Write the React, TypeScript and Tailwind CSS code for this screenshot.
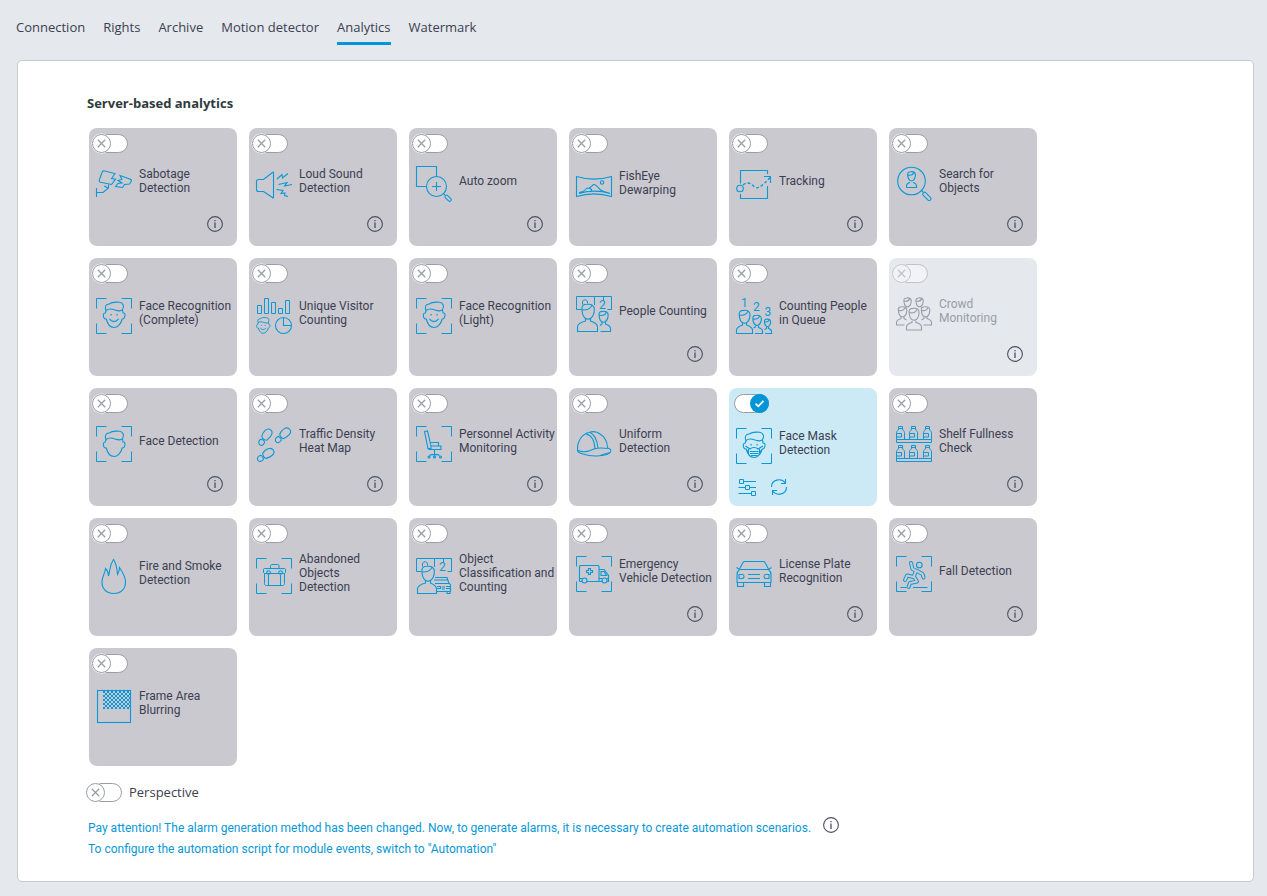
import React, { useId, useState } from 'react';
import clsx from 'clsx';

type IconName =
  | 'sabotage' | 'sound' | 'zoom' | 'fisheye' | 'tracking' | 'search'
  | 'face' | 'visitors' | 'people' | 'queue' | 'crowd' | 'faceOutline'
  | 'steps' | 'chair' | 'helmet' | 'mask' | 'shelf' | 'fire' | 'suitcase'
  | 'objects' | 'ambulance' | 'car' | 'fall' | 'blur';

interface Module {
  title: string;
  icon: IconName;
  info?: boolean;
  enabled?: boolean;
  disabled?: boolean;
}

const TABS = ['Connection', 'Rights', 'Archive', 'Motion detector', 'Analytics', 'Watermark'];

const MODULES: Module[] = [
  { title: 'Sabotage\nDetection', icon: 'sabotage', info: true },
  { title: 'Loud Sound\nDetection', icon: 'sound', info: true },
  { title: 'Auto zoom', icon: 'zoom', info: true },
  { title: 'FishEye\nDewarping', icon: 'fisheye' },
  { title: 'Tracking', icon: 'tracking', info: true },
  { title: 'Search for\nObjects', icon: 'search', info: true },
  { title: 'Face Recognition\n(Complete)', icon: 'face' },
  { title: 'Unique Visitor\nCounting', icon: 'visitors' },
  { title: 'Face Recognition\n(Light)', icon: 'face' },
  { title: 'People Counting', icon: 'people', info: true },
  { title: 'Counting People\nin Queue', icon: 'queue' },
  { title: 'Crowd\nMonitoring', icon: 'crowd', info: true, disabled: true },
  { title: 'Face Detection', icon: 'faceOutline', info: true },
  { title: 'Traffic Density\nHeat Map', icon: 'steps', info: true },
  { title: 'Personnel Activity\nMonitoring', icon: 'chair', info: true },
  { title: 'Uniform\nDetection', icon: 'helmet', info: true },
  { title: 'Face Mask\nDetection', icon: 'mask', enabled: true },
  { title: 'Shelf Fullness\nCheck', icon: 'shelf', info: true },
  { title: 'Fire and Smoke\nDetection', icon: 'fire' },
  { title: 'Abandoned\nObjects\nDetection', icon: 'suitcase' },
  { title: 'Object\nClassification and\nCounting', icon: 'objects' },
  { title: 'Emergency\nVehicle Detection', icon: 'ambulance', info: true },
  { title: 'License Plate\nRecognition', icon: 'car', info: true },
  { title: 'Fall Detection', icon: 'fall', info: true },
  { title: 'Frame Area\nBlurring', icon: 'blur' },
];

const Brackets = () => (
  <path strokeWidth={1} d="M.5 10.5V.5h10M25.5.5h10v10M35.5 25.5v10h-10M10.5 35.5H.5v-10" />
);

const FaceShape = () => (
  <>
    <path d="M10 12.5C8.5 9 9.5 5.8 13.5 6C16 3.6 20 4 23.5 4.3C27.5 5 28.5 8.5 26.5 11.5C25 13.5 22 13 19 12C15.500 10.500 12.500 10.500 10 12.500Z" />
    <path d="M10 12.5L9.300 15C7 15 6.800 18 8 20C8.700 21.200 9.500 21 10.300 21C11.500 26 14.500 29.500 18 29.500C21.500 29.500 25 26 26.200 21C27.500 21 28.800 19.500 29 17.500C29.200 15.500 28.300 14.800 27 15L26.500 11.500" />
  </>
);

const Smile = () => (
  <>
    <path d="M13.500 20.800C15.500 24.500 20.500 24.500 22.500 20.800" />
    <path d="M14.500 16.800h1.200M20.500 16.800h1.200" strokeWidth={1.600} />
  </>
);

const Head = ({ x, y, s }: { x: number; y: number; s: number }) => (
  <g transform={`translate(${x} ${y}) scale(${s})`} strokeWidth={1.1 / s}>
    <path d="M-5.500-2C-6-6 -4-7 -1-7C3-7.500 6-6 5.800-2C5.600 1.500 5 4 2.500 5.700C1 6.700 -1 6.700 -2.500 5.700C-5 4 -5.300 1-5.500-2Z" />
    <path d="M-5.300-2C-1-1.500 2.500-3 3.500-6.200" />
  </g>
);

const Prints = ({ x, y, r }: { x: number; y: number; r: number }) => (
  <g transform={`translate(${x} ${y}) rotate(${r})`}>
    <path d="M-3.500-3.200C0-5 7-5 7 0C7 4.800 0 4-3.500 3C-5 2-5-2-3.500-3.200Z" />
    <path d="M-6.500-2.600C-9-3.200-11.500-2.200-11.500.2C-11.500 2.800-9 3-6.500 2.500C-5.500 1.500-5.500-1.500-6.500-2.600Z" />
  </g>
);

const Bottle = ({ x, y }: { x: number; y: number }) => (
  <path
    strokeWidth={1}
    transform={`translate(${x} ${y})`}
    d="M.5 13.500V6.500C.5 5 2.500 4.500 2.500 3V.5H6.500V3C6.500 4.500 8.500 5 8.500 6.500V13.500M2.500 2.500H6.500M.5 7.500H5.500V11H.5"
  />
);

const CounterScreen = () => (
  <>
    <path strokeWidth={1} d="M5.500 13.500H.5V.5H35.500V13.500H31.500M18.500.5V9M27.500.5V4M6.500 8.500V6C7 3 11 3 11.500 6V7.500" />
    <text x="23" y="13" fontSize="12" fill="currentColor" stroke="none">2</text>
  </>
);

// 2px checkerboard, 14 by 9 cells
const checkerPath = Array.from({ length: 14 * 9 }, (_, i) => [i % 14, Math.floor(i / 14)])
  .filter(([col, row]) => (col + row) % 2 === 0)
  .map(([col, row]) => `M${7 + col * 2} ${3 + row * 2}h2v2h-2z`)
  .join('');

const drawings: Record<IconName, React.ReactNode> = {
  sabotage: (
    <>
      <path d="M8.500 5L19 7.500L15.500 12.500L19.500 13.200L15.500 18.500L4.500 16.200C3.300 16 3 15 3.500 13.500L6 6.500C6.400 5.200 7.300 4.700 8.500 5Z" />
      <path d="M24 9.500L35 13.500L35.500 15L33.500 18L28.500 18.500L26.500 21.500L19.500 20.500L22 17.500L26 17L22 14.500L26 13.500Z" />
      <path d="M.5 22V31M.5 26.500H7L12.500 22V18.500M8 20L12 22" />
    </>
  ),
  sound: (
    <>
      <path d="M17.500 6.500V31.500C17.500 32 17 32 16.500 31.500L7.500 25.500H2.500C1.300 25.500.5 24.700.5 23.500V15.500C.5 14.300 1.300 13.500 2.500 13.500H7.500L16.500 6.500C17 6 17.500 6 17.500 6.500Z" />
      <path d="M21 13L26 8.500L26.500 12L32 7.500M22.500 18.500L31 16.500L28.500 20L36 18.500M20.500 23.500L27 24.500L25 27.500L29 27L28.500 29.500L32 30.500" />
    </>
  ),
  zoom: (
    <>
      <path d="M10.500 20.500H.5V.5H20.500V10.500" />
      <circle cx="20.500" cy="20.500" r="10" />
      <path d="M20.500 16V25M16 20.500H25M27.500 27.500L29 29" />
      <rect x="-3.500" y="-1.500" width="7.500" height="3.200" rx="1.500" transform="translate(32 32) rotate(45)" />
    </>
  ),
  fisheye: (
    <>
      <path d="M.5 8.500C12 12 24 12 35.500 8.500V28.500C24 25 12 25 .5 28.500Z" />
      <path d="M3 24.500C7 24 9 22.500 11 20L13 20.500L17.500 16.500C19.500 16 21 18 24 21.500C27 24 30 24 34 25.500M3 25.500C13 22.500 24 22.500 34 25.500M13.500 20L15.500 21.500L15 23" />
      <circle cx="26" cy="14.500" r="1.700" />
    </>
  ),
  tracking: (
    <>
      <path d="M4.500 17.500V4.500H31.500V8M4.500 28V32.500H31.500V20" />
      <circle cx="4" cy="22.500" r="3.300" />
      <path d="M28 10.500H34.500V17" />
      <path d="M7 19C11 15.500 15 17 18 20.500C21 23.500 25 21.500 34 11.500" strokeDasharray="3 2" strokeWidth={1.300} />
    </>
  ),
  search: (
    <>
      <circle cx="15.500" cy="15" r="13.800" />
      <Head x={15.5} y={10.5} s={0.68} />
      <path d="M10.500 21.500H20.500V20C20.500 18 19 17 17 16.500M14 16.500C12 17 10.500 18 10.500 20V21.500M25.500 24.500L27 26" />
      <rect x="-4.500" y="-1.800" width="10" height="3.600" rx="1.500" transform="translate(30.500 30) rotate(45)" />
    </>
  ),
  face: (
    <>
      <Brackets />
      <FaceShape />
      <Smile />
    </>
  ),
  visitors: (
    <>
      <path strokeWidth={1} d="M1.500 7.500H5.500V15.500H1.500ZM8.500.5H12.500V15.500H8.500ZM15.500 4.500H19.500V15.500H15.500ZM22.500 10.500H26.500V15.500H22.500ZM29.500 2.500H33.500V15.500H29.500Z" />
      <g transform="translate(-4 17) scale(.62)" strokeWidth={1.500}>
        <FaceShape />
        <Smile />
      </g>
      <circle cx="27.500" cy="27.500" r="8" />
      <path d="M27.500 19.500V27.500H35.500" />
    </>
  ),
  people: (
    <>
      <CounterScreen />
      <Head x={12} y={16} s={1.1} />
      <path d="M9.500 22.500V25C4 26.500 1.500 28 1.500 31V35.500H21.500V31C21.500 28 19 26.500 14.500 25V22.500" />
      <Head x={27.5} y={21} s={0.8} />
      <path d="M26 26V28L24 29.500M29.500 26V28C33 29.500 34.500 30 34.500 33V35.500H24.500" />
    </>
  ),
  queue: (
    <>
      <g fill="currentColor" stroke="none" fontSize="12">
        <text x="5" y="9">1</text>
        <text x="17" y="13">2</text>
        <text x="28.500" y="18">3</text>
      </g>
      <Head x={8.5} y={19} s={0.95} />
      <path d="M6.500 25V27C2.500 28.500.5 29.500.5 32V35.500H16.500V32C16.500 29.500 14.500 28.500 10.500 27V25" />
      <Head x={21} y={22.5} s={0.75} />
      <path d="M19.500 27.500V29L17.500 30M22.500 27.500V29.500C25.500 30.500 26.500 31 26.500 33V35.500H19" />
      <Head x={31.5} y={25} s={0.55} />
      <path d="M30.500 29V30.500L28.500 31.500M32.500 29V30.500C34.500 31 35.500 32 35.500 33.500V35.500H29" />
    </>
  ),
  crowd: (
    <>
      <Head x={11.5} y={6.5} s={0.65} />
      <Head x={23.5} y={6.5} s={0.65} />
      <Head x={6.5} y={16} s={0.75} />
      <Head x={29.500} y={16} s={0.75} />
      <Head x={18} y={18.5} s={0.88} />
      <path d="M16 25V26.500C12 27.500 10.500 28.500 10.500 31V34H25.500V31C25.500 28.500 24 27.500 20 26.500V25M5 21V22.500C2 23.500.5 24.500.5 26.500V29H8.500M8 21V22.500L10.500 24M31 21V22.500C34 23.500 35.500 24.500 35.500 26.500V29H27.500M28 21V22.500L25.500 24M10 11.500V13M25.500 11.500V13" />
    </>
  ),
  faceOutline: (
    <>
      <Brackets />
      <g transform="translate(0 1)">
        <FaceShape />
      </g>
    </>
  ),
  steps: (
    <>
      <Prints x={10.5} y={9.5} r={-54} />
      <Prints x={28.5} y={8} r={-42} />
      <Prints x={11.500} y={28} r={-32} />
    </>
  ),
  chair: (
    <>
      <Brackets />
      <path d="M8.500 5.500L11.500 5L15 20V22.500H12L8.500 5.500ZM15 20H25V23.500H13L12 22.500M15 16.500H22.500V20M18.500 23.500V28M13.500 29.500C15 28 22 28 23.500 29.500M18.500 28V30.500" />
      <circle cx="13" cy="31" r="1" />
      <circle cx="18.500" cy="31" r="1" />
      <circle cx="24.500" cy="31" r="1" />
    </>
  ),
  helmet: (
    <>
      <path d="M1.500 24.500C1 15 6 8 13 6.500C17 5 21 5.500 24 8C29 11 31.500 16 31.500 22C34 22.500 35.500 24 34.500 26C32 30 17 31.500 7 28C3.500 27 1.500 26 1.500 24.500Z" />
      <path d="M2 24.500C8 27 13 25.500 18 23C23 21.500 28 22 31.500 22.500M10 8C15.500 9 18.500 15 19 23M14 6.500C18 8 21.500 14 22 22.500" />
      <path d="M24 29.500C27 28.500 30 27.500 34 26.500" />
    </>
  ),
  mask: (
    <>
      <Brackets />
      <FaceShape />
      <path d="M14.500 16.800h1.200M20.500 16.800h1.200" strokeWidth={1.600} />
      <path d="M9.500 18L14 21C16 19 20 19 22 21L27 18M12.500 21V25L10.500 22M23.500 21V25L25.500 22M14 23.500H22.500M14 25.500H22.500M15 27.500H21.500" />
    </>
  ),
  shelf: (
    <>
      <Bottle x={0} y={0} />
      <Bottle x={13} y={0} />
      <Bottle x={27} y={0} />
      <path strokeWidth={1} d="M.5 13.500H35.500V16.500H.5Z" />
      <Bottle x={0} y={19} />
      <Bottle x={13} y={19} />
      <Bottle x={27} y={19} />
      <path strokeWidth={1} d="M.5 32.500H35.500V35.500H.5Z" />
    </>
  ),
  fire: (
    <path d="M17.500 35.500C10 35.500 5.500 30 6 23C6.500 18 9 15.500 9.500 10.500C11.500 12.500 12.500 14.500 12.500 18C14.500 12 13 8 17.500 1.500C20.500 5.500 21 10 21.500 16.500C23 14 23.500 12 23.500 9.500C26.500 14 29.500 19 29.500 24C29.500 31 25 35.500 17.500 35.500Z" />
  ),
  suitcase: (
    <>
      <Brackets />
      <path strokeWidth={1} d="M8.500 15.500H28.500V25.500C28.500 26.700 27.700 27.500 26.500 27.500H10.500C9.300 27.500 8.500 26.700 8.500 25.500ZM8.500 15.500L7.500 14.500V11.500C7.500 10.800 8 10.500 8.500 10.500H28.500C29 10.500 29.500 10.800 29.500 11.500V14.500L28.500 15.500M14.500 10.500V8C14.500 6.800 15.300 6.500 16 6.500H21.500C22.500 6.500 23 6.800 23 8V10.500M12.500 17V27.500M24.500 17V27.500" />
      <circle cx="12.500" cy="14.500" r="1.800" />
      <circle cx="24.500" cy="14.500" r="1.800" />
    </>
  ),
  objects: (
    <>
      <CounterScreen />
      <Head x={12} y={16} s={1.1} />
      <path d="M9.500 22.500V25C4 26.500 1.500 28 1.500 31V35.500H20.500V31C20.500 28 18 26.500 14.500 25V22.500" />
      <path d="M19 19.500H31L33 25.500M18 22H32M19 25.500H33.500L34.500 27V33.500H20.500M21 28.500H24.500V30.500H21M30 28.500H34.500M30 30.500H34.500M26 29H29M26 31H29M31 33.500V35.500H34V33.500" />
    </>
  ),
  ambulance: (
    <>
      <Brackets />
      <path d="M6 25.500H4C3.700 25.500 3.500 25.300 3.500 25V10.500C3.500 9.800 4 9.500 4.500 9.500H22C22.700 9.500 23 10 23 10.500V25.500H11M23 13.500H28L32.500 19.500V25.500H31M23 25.500H26M25 15.500H28L30.500 19.500H25ZM4 22.500H6M23 22.500H26M31 22.500H33" />
      <path d="M12.500 12.500H14.500V14.500H16.500V16.500H14.500V18.500H12.500V16.500H10.500V14.500H12.500Z" />
      <circle cx="8.500" cy="24.500" r="2.500" />
      <circle cx="28.500" cy="24.500" r="2.500" />
    </>
  ),
  car: (
    <>
      <path d="M3.500 13L7 6.500C7.500 5.700 8 5.500 8.500 5.500H27.500C28 5.500 28.500 5.700 29 6.500L32.500 13M.5 11.500L3.500 13.500M35.500 11.500L32.500 13.500M3.500 13.500H32.500C34.500 15 35 17 35 19V26.500H1V19C1 17 1.500 15 3.500 13.500ZM1.500 26.500V30.500H7.500V26.500M28.500 26.500V30.500H34.500V26.500" />
      <path d="M3 18.500H6.500C7.500 18.500 8 19.500 8 20.500C8 21.500 7.500 22.500 6.500 22.500H3ZM33 18.500H29.500C28.500 18.500 28 19.500 28 20.500C28 21.500 28.500 22.500 29.500 22.500H33ZM12 18.500H24M12 22.500H24" />
    </>
  ),
  fall: (
    <>
      <Brackets />
      <circle cx="23.300" cy="9" r="2.800" />
      <g strokeLinecap="round" strokeLinejoin="round">
        <path d="M15 7L16.500 13L21 15L26.500 18L27.500 21.500M20 15L17.500 21L11 19.500L9 24M18 20.500L21 25.500L14 27L12.500 31" strokeWidth={4} />
        <path d="M15 7L16.500 13L21 15L26.500 18L27.500 21.500M20 15L17.500 21L11 19.500L9 24M18 20.500L21 25.500L14 27L12.500 31" strokeWidth={2} stroke="#cac9d0" />
      </g>
      <path strokeWidth={1} d="M4.500 31.500H10.500M17 31.500H31.500" />
    </>
  ),
  blur: (
    <>
      <path d={checkerPath} fill="currentColor" stroke="none" />
      <rect x="1.500" y="2.500" width="33" height="32" />
    </>
  ),
};

const ModuleIcon = ({ name }: { name: IconName }) => (
  <svg className="size-9 shrink-0 overflow-visible" viewBox="0 0 36 36" fill="none" stroke="currentColor" strokeWidth={1.1} aria-hidden="true">
    {drawings[name]}
  </svg>
);

const InfoButton = () => (
  <button type="button" aria-label="Information" className="size-4 text-[#4b5161]">
    <svg className="size-4" viewBox="0 0 16 16" fill="none" stroke="currentColor" aria-hidden="true">
      <circle cx="8" cy="8" r="7.400" strokeWidth={1.100} />
      <path d="M8 6.500V12M8 4V5.300" strokeWidth={1.300} />
    </svg>
  </button>
);

interface ToggleProps {
  label: string;
  defaultChecked?: boolean;
  disabled?: boolean;
  id?: string;
  onChange?: (on: boolean) => void;
}

const Toggle = ({ label, defaultChecked = false, disabled = false, id, onChange }: ToggleProps) => {
  const [on, setOn] = useState(defaultChecked);
  return (
    <label className={clsx('relative block h-5 w-9', disabled ? 'opacity-50' : 'cursor-pointer')}>
      <input
        id={id}
        type="checkbox"
        className="sr-only"
        aria-label={label}
        checked={on}
        disabled={disabled}
        onChange={e => {
          setOn(e.target.checked);
          onChange?.(e.target.checked);
        }}
      />
      <svg className="h-5 w-9 overflow-visible" viewBox="0 0 36 20" fill="none" stroke="#9a9da8" aria-hidden="true">
        {on ? (
          <>
            <rect x="2.500" y="1.500" width="34" height="18" rx="9" fill="#fff" />
            <circle cx="27.500" cy="10.500" r="9.500" fill="#0095d6" stroke="none" />
            <path d="M23.500 10.700L26.300 13.300L31.500 7.800" stroke="#fff" strokeWidth={1.800} />
          </>
        ) : (
          <>
            <rect x="1.500" y="1.500" width="34" height="18" rx="9" fill="#fff" />
            <circle cx="9.500" cy="10.500" r="10" fill="#fff" stroke="none" />
            <circle cx="9.500" cy="10.500" r="9" />
            <path d="M5.800 6.800L13.200 14.200M13.200 6.800L5.800 14.200" strokeWidth={1.300} />
          </>
        )}
      </svg>
    </label>
  );
};

const ModuleCard = ({ module }: { module: Module }) => {
  const [enabled, setEnabled] = useState(!!module.enabled);
  return (
    <article
      className={clsx(
        'flex h-[118px] flex-col rounded-lg pt-[5px]',
        module.disabled ? 'bg-[#e5e8ed]' : enabled ? 'bg-[#cceaf6]' : 'bg-[#cac9d0]',
      )}
    >
      <div className="pl-[3px]">
        <Toggle
          label={module.title.replace(/\n/g, ' ')}
          defaultChecked={module.enabled}
          disabled={module.disabled}
          onChange={setEnabled}
        />
      </div>
      <div className={clsx('flex flex-1 items-center gap-[7px] pl-[7px]', module.disabled ? 'text-[#9a9da8]' : 'text-[#0a98d6]')}>
        <ModuleIcon name={module.icon} />
        <h3 className={clsx('pb-1.5 text-[12px] leading-[14px] whitespace-pre', module.disabled ? 'text-[#9a9da8]' : 'text-[#3b4050]')}>
          {module.title}
        </h3>
      </div>
      <div className={clsx('flex', module.info ? 'h-[31px] justify-end pt-px pr-3.5' : 'h-[27px] gap-3.5 pl-[9px]')}>
        {module.info && <InfoButton />}
        {enabled && (
          <>
            <button type="button" aria-label="Settings" className="size-[18px] text-[#0a98d6]">
              <svg className="size-[18px]" viewBox="0 0 18 18" fill="none" stroke="currentColor" aria-hidden="true">
                <path d="M1.500.5H5.500V4.500H1.500ZM5.500 2.500H18M.5 8.500H7.500M7.500 6.500H11.500V10.500H7.500ZM11.500 8.500H18M.5 14.500H13.500M13.500 12.500H17.500V16.500H13.500Z" />
              </svg>
            </button>
            <button type="button" aria-label="Refresh" className="size-[18px] text-[#0a98d6]">
              <svg className="size-[18px]" viewBox="0 0 18 18" fill="none" stroke="currentColor" strokeWidth={1.100} aria-hidden="true">
                <path d="M1.500 8C1.500 .5 11 -1.500 15.500 4M15.500 0V4.500H11M16.500 8C16.500 15.500 7 17.500 2.500 12M2.500 16V11.500H7" />
              </svg>
            </button>
          </>
        )}
      </div>
    </article>
  );
};

export default function App() {
  const perspectiveId = useId();
  const [tab, setTab] = useState('Analytics');

  return (
    <div className="flex min-h-screen flex-col bg-[#e5e8ed] px-4 pb-3.5 font-['Open_Sans','Noto_Sans',sans-serif] text-[13px] leading-5 text-[#3b4050]">
      <nav className="flex h-[60px] gap-[18px] pt-[17px]">
        {TABS.map(name => (
          <a
            key={name}
            href={`#${name}`}
            onClick={() => setTab(name)}
            className={clsx('h-7 border-b-3', name === tab ? 'border-[#0095d6]' : 'border-transparent')}
          >
            {name}
          </a>
        ))}
      </nav>

      <main className="ml-px mr-[-3px] flex-1 rounded-[5px] border border-[#c9cad1] bg-white pt-8 pb-5 pl-[69px]">
        <h2 className="mb-[15px] font-bold text-[#2f3b3d]">Server-based analytics</h2>

        <section className="grid grid-cols-[repeat(6,148px)] gap-3 pl-0.5 font-['Roboto',sans-serif]">
          {MODULES.map((module, i) => (
            <ModuleCard key={i} module={module} />
          ))}
        </section>

        <div className="mt-4 -ml-px flex items-center gap-[7px]">
          <Toggle id={perspectiveId} label="Perspective" />
          <label htmlFor={perspectiveId}>Perspective</label>
        </div>

        <div className="mt-[15px] flex items-start gap-3 pl-px font-['Roboto',sans-serif] text-[12px] leading-[21px] text-[#0a98d6]">
          <div className="pt-px">
            <p>Pay attention! The alarm generation method has been changed. Now, to generate alarms, it is necessary to create automation scenarios.</p>
            <p>To configure the automation script for module events, switch to "Automation"</p>
          </div>
          <InfoButton />
        </div>
      </main>
    </div>
  );
}
